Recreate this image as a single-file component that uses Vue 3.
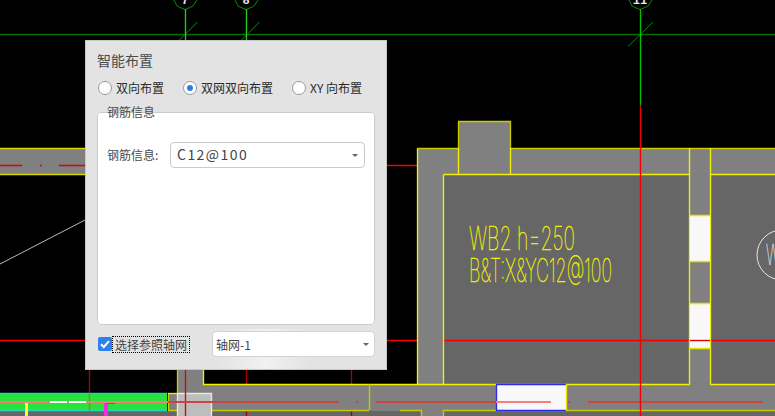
<script setup>
import { ref } from 'vue'
const mode = ref('net')
const modes = [
  { id: 'two', label: '双向布置' },
  { id: 'net', label: '双网双向布置' },
  { id: 'xy', label: 'XY 向布置' }
]
const useGrid = ref(true)
</script>

<template>
  <div class="stage">
    <svg class="cad" width="775" height="416" viewBox="0 0 775 416" shape-rendering="crispEdges">
      <rect width="775" height="416" fill="#000" />

      <!-- axis bubbles and grid -->
      <g fill="none">
        <path class="fine" d="M174 0 L177 6 L180 7.5 L185 9.5 L190 7.5 L193 6 L197 0" stroke="#0a8a0a" />
        <path class="fine" d="M235 0 L238 6 L241 7.5 L246 9.5 L251 7.5 L254 6 L258 0" stroke="#0a8a0a" />
        <path class="fine" d="M629 0 L632 6 L635 7.5 L640 9.5 L645 7.5 L648 6 L652 0" stroke="#0a8a0a" />
        <path class="fine" d="M197.5 22 L173 46.5 M259.5 22 L235 46.5 M653 22 L628 46.5" stroke="#0a8a0a" />
      </g>
      <text x="185" y="4" class="axis">7</text>
      <text x="246" y="4" class="axis">8</text>
      <text x="640" y="4" class="axis">11</text>
      <path d="M0 34.5 H775" stroke="#006e00" />
      <path d="M185.5 9 V40 M246.5 9 V40" stroke="#22cc22" />
      <path d="M640.5 9 V105" stroke="#00c000" />

      <!-- slabs and walls -->
      <rect x="0" y="411" width="775" height="5" fill="#666" />
      <rect x="0" y="148" width="90" height="26" fill="#808080" />
      <path d="M0 148.5 H90 M0 174.5 H90" stroke="#d8d800" />
      <path d="M0 165.5 H22 M40 165.5 H42 M59 165.5 H90" stroke="#e00000" />

      <path d="M417 148 H458 V121 H511 V148 H775 V384 H417 Z" fill="#808080" />
      <rect x="443" y="174" width="246" height="210" fill="#666" />
      <rect x="711" y="174" width="64" height="210" fill="#666" />
      <rect x="203" y="384" width="572" height="27" fill="#808080" />
      <rect x="168" y="393" width="35" height="18" fill="#808080" />
      <rect x="177" y="370" width="26" height="24" fill="#808080" />
      <rect x="422" y="411" width="21" height="5" fill="#808080" />

      <path d="M387 165.5 H417 M0 340.5 H90 M385 340.5 H417 M444 340.5 H775" stroke="#f00000" />
      <path d="M89.5 370 V393 M246.5 370 V384 M351.5 370 V384 M246.5 411 V416 M351.5 411 V416" stroke="#b00000" />

      <!-- yellow outlines -->
      <g stroke="#f2f200" fill="none">
        <path d="M417.5 148.5 H458.5 V121.5 H510.5 V148.5 H775" stroke="#caca00" />
        <path d="M417.5 148.5 V384 M443.5 174.5 V384 M458.5 148 V174 M510.5 148 V174" />
        <path d="M443.5 174.5 H689 M711 174.5 H775" />
        <path d="M689.5 148 V384.5 M710.5 148 V384.5" />
        <path d="M203.5 370 V384.5 H689.5 M710.5 384.5 H775" />
        <path d="M177.5 370 V393" stroke="#caca00" />
        <path d="M168.5 393 V410.5 H369 M369.5 384 V410 M400 410.5 H421.5 V416 M443.5 416 V410.5 H775" stroke="#caca00" />
        <path d="M168 393.5 H177" />
      </g>

      <!-- openings -->
      <rect x="690" y="215" width="20" height="47" fill="#f8f8f8" />
      <rect x="690" y="303" width="20" height="46" fill="#f8f8f8" />
      <path d="M690 215.5 H710 M690 261.5 H710 M690 303.5 H710 M690 348.5 H710" stroke="#e6e600" />
      <path d="M690 340.5 H710" stroke="#e00000" />
      <rect x="496" y="384" width="70" height="27" fill="#f8f8f8" />
      <path d="M566 384.5 H496.5 V410.5 H566" fill="none" stroke="#2a2ae8" />
      <path d="M566.5 384 V411" stroke="#e6e600" />

      <!-- green beam -->
      <rect x="0" y="393" width="167" height="18" fill="#2ae33a" />
      <path d="M0 393.5 H167 M0 410.5 H167" stroke="#1fd8c0" />
      <path d="M89.5 393 V411" stroke="#a08020" />
      <rect x="177" y="393" width="35" height="23" fill="#bdbdbd" />
      <path d="M177 393.5 H211.5 V416 M177.5 393 V416" fill="none" stroke="#e8e8e8" />
      <rect x="25" y="403" width="3" height="13" fill="#ffff30" />
      <rect x="104" y="403" width="4" height="13" fill="#f030e0" />
      <rect x="106" y="401" width="9" height="3" fill="#e020a0" />
      <path d="M185.5 370 V416" stroke="#e00000" />

      <!-- rebar line -->
      <rect x="0" y="401" width="168" height="2" fill="#f08080" />
      <rect x="50" y="401" width="17" height="2" fill="#fff" />
      <rect x="69" y="401" width="17" height="2" fill="#fff" />
      <rect x="168" y="401" width="171" height="2" fill="#cc4444" />
      <rect x="356" y="401" width="2" height="2" fill="#cc4444" />
      <rect x="376" y="401" width="120" height="2" fill="#cc4444" />
      <rect x="496" y="401" width="55" height="2" fill="#ff7a7a" />
      <rect x="568" y="401" width="2" height="2" fill="#cc4444" />
      <rect x="588" y="401" width="175" height="2" fill="#cc4444" />

      <path d="M640.5 105 V416" stroke="#f00000" />

      <!-- annotations -->
      <path class="fine" d="M0 264 L85 220" stroke="#b8b8b8" />
      <circle cx="782" cy="255" r="25" fill="none" stroke="#e6e6e6" shape-rendering="auto" />
      <g shape-rendering="auto">
        <text x="469" y="250" class="note" textLength="106" lengthAdjust="spacingAndGlyphs">WB2 h=250</text>
        <text x="469" y="282" class="note" textLength="143" lengthAdjust="spacingAndGlyphs">B&amp;T:X&amp;YC12@100</text>
        <text x="766" y="265" class="mark" textLength="14" lengthAdjust="spacingAndGlyphs">W</text>
      </g>
    </svg>

    <section class="dialog">
      <h1 class="title">智能布置</h1>

      <div class="modes">
        <label v-for="m in modes" :key="m.id" class="radio" :class="'radio-' + m.id" @click="mode = m.id">
          <span class="dot" :class="{ on: mode === m.id }"></span>
          <span>{{ m.label }}</span>
        </label>
      </div>

      <fieldset class="group">
        <legend class="legend">钢筋信息</legend>
        <div class="row">
          <span class="row-label">钢筋信息:</span>
          <div class="select wide">
            <span class="value">C12@100</span>
            <i class="caret"></i>
          </div>
        </div>
      </fieldset>

      <div class="footer">
        <label class="check" @click="useGrid = !useGrid">
          <span class="box">
            <svg v-if="useGrid" width="14" height="14" viewBox="0 0 14 14">
              <path d="M3 7.2 L5.8 10 L11 4.2" fill="none" stroke="#fff" stroke-width="2" />
            </svg>
          </span>
          <span class="check-text">选择参照轴网</span>
        </label>
        <div class="select grid-select">
          <span>轴网-1</span>
          <i class="caret"></i>
        </div>
      </div>
    </section>
  </div>
</template>

<style>
html, body { margin: 0; background: #000; overflow: hidden; }
</style>

<style scoped>
.stage {
  position: relative;
  width: 775px;
  height: 416px;
  overflow: hidden;
  background: #000;
  font-family: "Noto Sans CJK SC", "Noto Sans", sans-serif;
}
.cad { display: block; }
.cad path {
  stroke-width: 1.35px;
  shape-rendering: auto;
}
.cad path.fine { stroke-width: 1px; }
.axis {
  font-family: "Liberation Mono", monospace;
  font-size: 12px;
  font-weight: 700;
  fill: #e8e8e8;
  text-anchor: middle;
}
.note {
  font-family: Inter, "Liberation Sans", sans-serif;
  font-size: 33px;
  font-weight: 100;
  fill: #f2f200;
  stroke: #f2f200;
  stroke-width: 0.45px;
}
.mark {
  font-family: Inter, "Liberation Sans", sans-serif;
  font-size: 28px;
  font-weight: 100;
  fill: #e6e6e6;
  stroke: #e6e6e6;
  stroke-width: 0.3px;
}
.dialog {
  position: absolute;
  left: 85px;
  top: 40px;
  width: 302px;
  height: 330px;
  box-sizing: border-box;
  padding: 10px 11px 11px 11px;
  display: flex;
  flex-direction: column;
  border: 1px solid #c6c6c6;
  background:
    linear-gradient(90deg, rgba(255,255,255,0) 130px, rgba(255,255,255,.5) 180px, rgba(255,255,255,0) 225px) bottom / 100% 40px no-repeat,
    #e3e3e3;
}
.title {
  margin: 0;
  font-size: 14px;
  line-height: 18px;
  font-weight: 400;
  color: #4a4a4a;
}
.modes {
  margin-top: 9px;
  height: 20px;
  padding-left: 1px;
  display: flex;
  align-items: center;
  color: #2a2a2a;
  font-size: 12px;
}
.radio {
  display: flex;
  align-items: center;
  gap: 4px;
  white-space: nowrap;
  line-height: 20px;
}
.radio-two { width: 85px; }
.radio-net { width: 109px; }
.dot {
  width: 14px;
  height: 14px;
  box-sizing: border-box;
  border: 1px solid #9a9a9a;
  border-radius: 50%;
  background: #fff;
  display: block;
  position: relative;
}
.dot.on::after {
  content: "";
  position: absolute;
  left: 3px;
  top: 3px;
  width: 6px;
  height: 6px;
  border-radius: 50%;
  background: #2b7de9;
}
.group {
  margin: 14px 0 0;
  padding: 20px 9px 0;
  height: 213px;
  width: 278px;
  box-sizing: border-box;
  border: 1px solid #cbcbcb;
  border-radius: 4px;
  background: #fff;
  position: relative;
}
.legend {
  position: absolute;
  left: 9px;
  top: -9px;
  padding: 0;
  font-size: 12px;
  line-height: 16px;
  color: #4a4a4a;
}
.row {
  margin-top: 9px;
  display: flex;
  align-items: center;
  font-size: 12px;
  color: #4a4a4a;
}
.row-label {
  width: 63px;
  flex: none;
  padding-bottom: 2px;
}
.select {
  height: 26px;
  box-sizing: border-box;
  border-radius: 4px;
  background: #fff;
  display: flex;
  align-items: center;
  justify-content: space-between;
  color: #444;
  font-size: 12px;
}
.value {
  font-size: 14px;
  letter-spacing: 1.45px;
  padding-bottom: 2px;
}
.wide {
  width: 195px;
  padding: 0 6px 0 6px;
  border: 1px solid #cbcbcb;
}
.caret {
  width: 0;
  height: 0;
  border-left: 3px solid transparent;
  border-right: 3px solid transparent;
  border-top: 3px solid #666;
}
.footer {
  margin-top: 6px;
  display: flex;
  align-items: center;
  justify-content: space-between;
  padding-left: 1px;
}
.check {
  display: flex;
  align-items: center;
  font-size: 12px;
  color: #444;
}
.box {
  width: 14px;
  height: 14px;
  border-radius: 2px;
  background: #2f80ed;
  display: block;
}
.box svg { display: block; }
.check-text {
  border: 1px dotted #000;
  padding: 0 2px;
  line-height: 15px;
  width: 72px;
  white-space: nowrap;
}
.grid-select {
  width: 163px;
  padding: 0 5px 0 3px;
  border: 1px solid #d2d2d2;
}
</style>
